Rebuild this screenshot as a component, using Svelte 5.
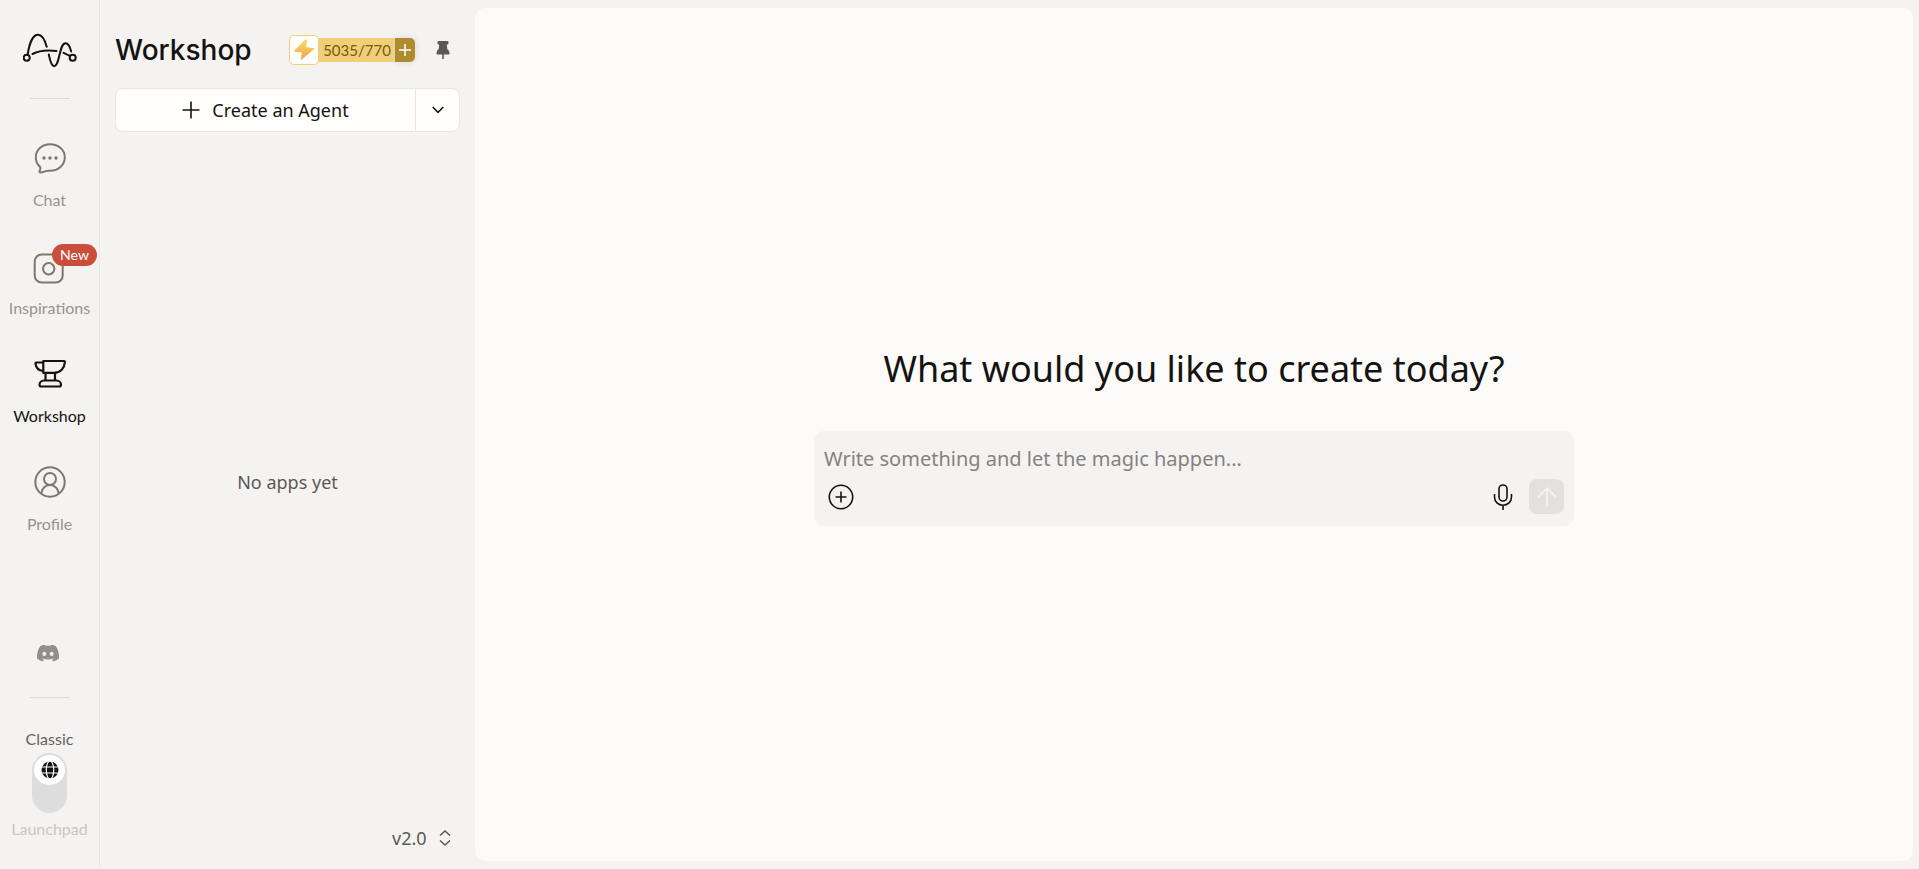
<script>
  let prompt = $state('');
  let version = $state('v2.0');
  let launchpad = $state(false);
</script>

<div class="shell">
  <nav class="rail">
    <a class="logo" href="/" aria-label="Home">
      <svg width="54" height="36" viewBox="0 0 54 36" fill="none" stroke="#141311" stroke-width="2" stroke-linecap="round">
        <circle cx="3.7" cy="24.8" r="3" />
        <circle cx="49.7" cy="24.8" r="3" />
        <path d="M4.700 21.500C6.500 9 10.500 1.800 15 1.800c4.500 0 6.800 5 8.700 12" />
        <path d="M25.800 21.500c1.200 6 2.500 11.700 5.200 11.700 6 0 5-23 11.500-23 3.200 0 4.800 4.500 5.700 8.300" />
        <path d="M9.500 21c6-3.200 14-4.200 24-3" />
        <path d="M40.500 19.800l6.500 3" />
      </svg>
    </a>
    <hr />
    <ul class="menu">
      <li>
        <a href="/chat">
          <svg width="36" height="36" viewBox="0 0 36 36" fill="none" stroke="#7b7870" stroke-width="2" stroke-linejoin="round">
            <path d="M18 4.200C9.800 4.200 3.800 10 3.800 17.300c0 4.200 1.600 7.300 4.300 9.700.8.800.5 1.700-.6 4.200-.4.900.1 1.300 1 1.200 2.200-.1 3.700-.5 5.200-1.200 1-.5 2.300-.4 4.300-.4 8.200 0 14.800-5.600 14.800-13.500C32.800 10 26.500 4.200 18 4.200z" />
            <g fill="#7b7870" stroke="none"><circle cx="12" cy="18" r="1.700" /><circle cx="18" cy="18" r="1.700" /><circle cx="24" cy="18" r="1.700" /></g>
          </svg>
          <span>Chat</span>
        </a>
      </li>
      <li>
        <a href="/inspirations">
          <svg width="36" height="36" viewBox="0 0 36 36" fill="none" stroke="#7b7870" stroke-width="2">
            <rect x="2.700" y="6.500" width="28" height="28" rx="7" />
            <circle cx="16.700" cy="20.700" r="5.700" />
          </svg>
          <span>Inspirations</span>
          <em class="new">New</em>
        </a>
      </li>
      <li>
        <a class="active" href="/workshop" aria-current="page">
          <svg width="36" height="36" viewBox="0 0 36 36" fill="none" stroke="#141311" stroke-width="2.200" stroke-linejoin="round">
            <path d="M11.300 5H32c.6 0 1 .4.900 1C32.500 12 28.500 16.800 22 16.800H11.300z" />
            <path d="M11.300 6.500H4.500c-.8 0-1.100.4-1 1.200.5 4.500 3.300 7 7.800 7.300" />
            <path d="M13.500 17v7.300M23 17v7.300" />
            <path d="M12 24.500h12.500c2.500 0 4.500 2 4.500 4.300 0 1-.7 1.700-1.700 1.700H9.200c-1 0-1.700-.7-1.700-1.700 0-2.300 2-4.300 4.500-4.300z" />
          </svg>
          <span>Workshop</span>
        </a>
      </li>
      <li>
        <a href="/profile">
          <svg width="36" height="36" viewBox="0 0 36 36" fill="none" stroke="#7b7870" stroke-width="2">
            <circle cx="18" cy="18" r="14.700" />
            <circle cx="18" cy="15" r="6" />
            <path d="M9.500 29.700c0-5 3.800-8.700 8.500-8.700s8.500 3.700 8.500 8.700" />
          </svg>
          <span>Profile</span>
        </a>
      </li>
    </ul>
    <div class="bottom">
      <a class="discord" href="/discord" aria-label="Discord">
        <svg width="22" height="18" viewBox="0 0 127 96" fill="#938e87">
          <path d="M107.700 8.100A105 105 0 0 0 81.500 0a72 72 0 0 0-3.400 6.800 97.700 97.700 0 0 0-29.100 0A72 72 0 0 0 45.600 0a106 106 0 0 0-26.200 8.100C2.800 32.700-1.700 56.600.5 80.200a105.700 105.700 0 0 0 32.200 16.200 77.700 77.700 0 0 0 6.900-11.200 68.400 68.400 0 0 1-10.900-5.200l2.700-2c20.900 9.700 43.600 9.700 64.200 0l2.700 2a68.700 68.700 0 0 1-10.900 5.200 77 77 0 0 0 6.900 11.200 105.300 105.300 0 0 0 32.200-16.200c2.600-27.400-4.500-51.100-18.800-72.100zM42.500 65.700c-6.300 0-11.500-5.700-11.500-12.700s5-12.800 11.500-12.800S54 46 53.900 53s-5.100 12.700-11.400 12.700zm42.200 0c-6.300 0-11.400-5.700-11.400-12.700s5-12.800 11.400-12.800S96.200 46 96.100 53s-5 12.700-11.400 12.700z" />
        </svg>
      </a>
      <hr />
      <label class="mode">
        <span>Classic</span>
        <input type="checkbox" role="switch" bind:checked={launchpad} />
        <span class="track">
          <span class="knob">
            <svg width="18" height="18" viewBox="0 0 18 18">
              <circle cx="9" cy="9" r="8.500" fill="#141311" />
              <g fill="none" stroke="#fff" stroke-width="1.200">
                <ellipse cx="9" cy="9" rx="3.700" ry="9" />
                <path d="M0 6h18M0 12h18" />
              </g>
            </svg>
          </span>
        </span>
        <span class="off">Launchpad</span>
      </label>
    </div>
  </nav>

  <aside class="panel">
    <header>
      <h1>Workshop</h1>
      <div class="credits">
        <span class="bolt">
          <svg width="24" height="24" viewBox="0 0 24 24">
            <defs>
              <linearGradient id="bolt" x1="0" y1="0" x2="0" y2="1">
                <stop offset="0" stop-color="#fbdc62" />
                <stop offset="1" stop-color="#eda04a" />
              </linearGradient>
            </defs>
            <path d="M13 1.500L1.500 13.500l8.500 1L8.500 22.500 23 10.500l-9-1.500L15.500 1.500z" fill="url(#bolt)" />
          </svg>
        </span>
        <span class="amount">5035/770</span>
        <button class="add" aria-label="Add credits">
          <svg width="14" height="14" viewBox="0 0 14 14" stroke="#fff" stroke-width="1.500"><path d="M7 1v12M1 7h12" /></svg>
        </button>
      </div>
      <button class="pin" aria-label="Pin panel">
        <svg width="14" height="18" viewBox="0 0 14 18" fill="#5c5852">
          <path d="M2.500 0h9q1 0 1 1v1.500q0 1-1 1h-.7l.5 4.500Q13.500 9.500 13.500 12v.7q0 .8-.8.800H1.300q-.8 0-.8-.8V12Q.5 9.500 2.700 8l.5-4.500h-.7q-1 0-1-1V1q0-1 1-1z" />
          <path d="M6.200 13h1.600v5H6.200z" />
        </svg>
      </button>
    </header>
    <div class="create">
      <button class="agent">
        <svg width="18" height="18" viewBox="0 0 18 18" stroke="#141311" stroke-width="1.600"><path d="M9 .5v17M.5 9h17" /></svg>
        Create an Agent
      </button>
      <button class="more" aria-label="More options">
        <svg width="12" height="8" viewBox="0 0 12 8" fill="none" stroke="#141311" stroke-width="1.600"><path d="M.7 1L6 6.300 11.300 1" /></svg>
      </button>
    </div>
    <p class="empty">No apps yet</p>
    <label class="version">
      <select aria-label="Version" bind:value={version}>
        <option>v2.0</option>
        <option>v1.0</option>
      </select>
      <svg width="12" height="16" viewBox="0 0 12 16" fill="none" stroke="#5c5852" stroke-width="1.500"><path d="M1 5.500l5-4.500 5 4.500M1 10.500L6 15l5-4.500" /></svg>
    </label>
  </aside>

  <main>
    <h2>What would you like to create today?</h2>
    <form class="composer" onsubmit={(e) => e.preventDefault()}>
      <input type="text" aria-label="Prompt" placeholder="Write something and let the magic happen..." bind:value={prompt} />
      <div class="tools">
        <button type="button" aria-label="Attach">
          <svg width="26" height="26" viewBox="0 0 26 26" fill="none" stroke="#141311" stroke-width="1.600"><circle cx="13" cy="13" r="11.700" /><path d="M13 7.500v11M7.500 13h11" /></svg>
        </button>
        <button type="button" class="mic" aria-label="Voice input">
          <svg width="20" height="26" viewBox="0 0 20 26" fill="none" stroke="#141311" stroke-width="1.600"><rect x="6" y="1" width="8" height="16" rx="4" /><path d="M1.500 10v3c0 4.700 3.800 8.300 8.500 8.300s8.500-3.600 8.500-8.300v-3M10 21.300V26" /></svg>
        </button>
        <button class="send" aria-label="Send" disabled={!prompt}>
          <svg width="20" height="20" viewBox="0 0 20 20" fill="none" stroke="#f4f3f1" stroke-width="1.800"><path d="M10 20V1.500M.7 10.500L10 1.200l9.300 9.300" /></svg>
        </button>
      </div>
    </form>
  </main>
</div>

<style>
  :global(body) { margin: 0; background: #f4f3f1; }
  .shell {
    display: grid; grid-template-columns: 100px 375px 1fr;
    min-height: 100vh; box-sizing: border-box;
    font-family: "Noto Sans", "Open Sans", sans-serif; font-size: 18px; color: #141311;
  }
  button { border: 0; padding: 0; background: none; font: inherit; color: inherit; cursor: pointer; display: flex; align-items: center; justify-content: center; }
  a { color: inherit; text-decoration: none; }
  svg { display: block; flex: none; }
  hr { width: 40px; height: 1px; border: 0; margin: 0; background: #dddcda; }

  .rail { display: flex; flex-direction: column; align-items: center; padding: 33px 0 30px; border-right: 1px solid #e8e7e5; box-sizing: border-box; font-family: Lato, "Noto Sans", sans-serif; font-size: 16px; }
  .logo { margin-bottom: 29px; }
  .menu { list-style: none; padding: 0; margin: 41px 0 0; width: 100%; }
  .menu li { height: 108px; }
  .menu a { display: flex; flex-direction: column; align-items: center; gap: 14px; position: relative; color: #97948f; line-height: 20px; }
  .menu a.active { color: #141311; }
  .new { position: absolute; top: -4px; right: 2px; background: #ca4e3a; color: #fff; font-style: normal; font-size: 14px; line-height: 22px; width: 45px; text-align: center; border-radius: 11px; }
  .bottom { margin-top: auto; display: flex; flex-direction: column; align-items: center; }
  .discord { margin: 0 4px 35px 0; }
  .mode { display: flex; flex-direction: column; align-items: center; margin-top: 31px; line-height: 20px; color: #66625c; cursor: pointer; }
  .mode input { appearance: none; margin: 0; width: 0; height: 0; }
  .track { display: flex; flex-direction: column; width: 35px; height: 60px; box-sizing: border-box; padding: 2px; margin: 4px 0 6px; border-radius: 18px; background: #dddddd; }
  .mode input:checked + .track { justify-content: flex-end; }
  .knob { display: flex; align-items: center; justify-content: center; width: 31px; height: 30px; border-radius: 50%; background: #fff; }
  .off { color: #c8c6c3; }

  .panel { display: flex; flex-direction: column; padding: 32px 15px 17px; }
  header { display: flex; align-items: center; height: 36px; }
  h1 { flex: 1; margin: 0; font-family: Inter, "Liberation Sans", sans-serif; font-size: 28px; font-weight: 500; }
  .credits { display: flex; align-items: center; }
  .bolt { display: flex; align-items: center; justify-content: center; width: 28px; height: 28px; border: 1px solid #f0cf78; border-radius: 5px; background: #fff; }
  .amount { background: #f0cf78; color: #7a5a06; font-family: Lato, sans-serif; font-size: 15px; line-height: 24px; height: 24px; width: 76px; text-align: center; }
  .add { width: 20px; height: 24px; background: #ac8c2e; border-radius: 0 5px 5px 0; box-shadow: 0 0 6px #d8d6d2; }
  .pin { margin: 0 10px 0 21px; }
  .create { display: flex; height: 42px; margin-top: 20px; border: 1px solid #e8e7e5; border-radius: 8px; background: #fffefd; }
  .agent { flex: 1; gap: 12px; }
  .more { width: 44px; border-left: 1px solid #e8e7e5; }
  .empty { flex: 1; margin: 7px 0 0; display: flex; align-items: center; justify-content: center; color: #5c5852; }
  .version { display: flex; align-items: center; justify-content: flex-end; gap: 12px; height: 28px; padding-right: 9px; color: #5c5852; }
  select { appearance: none; border: 0; padding: 0; background: none; font: inherit; color: inherit; }

  main { display: flex; flex-direction: column; align-items: center; justify-content: center; margin: 8px 6px 8px 0; padding: 0 24px; border-radius: 10px; background: #fcfbf9; }
  h2 { margin: 0 0 36px; font-size: 36px; font-weight: 400; line-height: 52px; text-align: center; }
  .composer { width: 100%; max-width: 760px; box-sizing: border-box; padding: 12px 10px; border-radius: 10px; background: #f4f3f1; }
  .composer input { display: block; width: 100%; height: 30px; box-sizing: border-box; border: 0; padding: 0; outline: 0; background: none; font: inherit; font-size: 20px; color: inherit; }
  .composer input::placeholder { color: #84827f; opacity: 1; }
  .tools { display: flex; align-items: center; height: 35px; margin-top: 6px; padding-left: 4px; }
  .mic { margin: 0 16px 0 auto; }
  .send { width: 35px; height: 35px; border-radius: 8px; background: #e2e1df; }
</style>
